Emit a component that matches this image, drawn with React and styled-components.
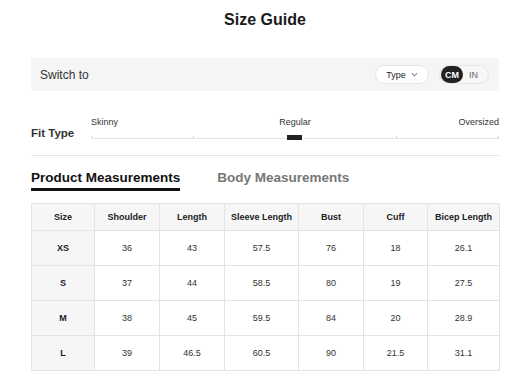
import React from 'react'
import styled, { createGlobalStyle } from 'styled-components'

const GlobalStyle = createGlobalStyle`
  body {
    margin: 0;
    background: #fff;
    font-family: "Liberation Sans", Arial, sans-serif;
    color: #222;
  }
`;

const columns = [
  { label: 'Size', width: 63 },
  { label: 'Shoulder', width: 65 },
  { label: 'Length', width: 65 },
  { label: 'Sleeve Length', width: 74 },
  { label: 'Bust', width: 65 },
  { label: 'Cuff', width: 64 },
  { label: 'Bicep Length', width: 72 },
];

const rows = [
  ['XS', '36', '43', '57.5', '76', '18', '26.1'],
  ['S', '37', '44', '58.5', '80', '19', '27.5'],
  ['M', '38', '45', '59.5', '84', '20', '28.9'],
  ['L', '39', '46.5', '60.5', '90', '21.5', '31.1'],
];

export default function App() {
  return (
    <Page>
      <GlobalStyle />
      <Title>Size Guide</Title>

      <SwitchBar>
        <SwitchLabel>Switch to</SwitchLabel>
        <Controls>
          <TypePill>
            Type
            <svg width="7" height="5" viewBox="0 0 7 5" fill="none">
              <path d="M0.8 1.2 L3.5 3.8 L6.2 1.2" stroke="#333" strokeWidth="0.9" />
            </svg>
          </TypePill>
          <UnitToggle>
            <Unit $active>CM</Unit>
            <Unit>IN</Unit>
          </UnitToggle>
        </Controls>
      </SwitchBar>

      <FitRow>
        <FitLabel>Fit Type</FitLabel>
        <Slider>
          <SliderLabels>
            <span>Skinny</span>
            <span>Regular</span>
            <span>Oversized</span>
          </SliderLabels>
          <Track>
            <Tick /><Tick /><Tick /><Tick /><Tick />
            <Marker />
          </Track>
        </Slider>
      </FitRow>

      <Tabs>
        <Tab $active>Product Measurements</Tab>
        <Tab>Body Measurements</Tab>
      </Tabs>

      <Table>
        <colgroup>
          {columns.map(c => <col key={c.label} style={{ width: c.width }} />)}
        </colgroup>
        <thead>
          <tr>
            {columns.map(c => <Th key={c.label}>{c.label}</Th>)}
          </tr>
        </thead>
        <tbody>
          {rows.map(r => (
            <tr key={r[0]}>
              {r.map((v, i) => <Td key={i} $head={i === 0}>{v}</Td>)}
            </tr>
          ))}
        </tbody>
      </Table>
    </Page>
  )
}

const Page = styled.div`
  width: 468px;
  padding: 10px 11px 0 31px;
`;

const Title = styled.h1`
  margin: 0;
  font-size: 16px;
  line-height: 20px;
  font-weight: bold;
  text-align: center;
  color: #1a1a1a;
`;

const SwitchBar = styled.div`
  margin-top: 28px;
  height: 33px;
  background: #f5f5f5;
  display: flex;
  align-items: center;
  justify-content: space-between;
  padding: 0 10px 0 9px;
`;

const SwitchLabel = styled.span`
  font-size: 12px;
  color: #333;
`;

const Controls = styled.div`
  display: flex;
  align-items: center;
  gap: 10px;
`;

const TypePill = styled.div`
  box-sizing: border-box;
  height: 19px;
  width: 54px;
  border: 1px solid #e6e6e6;
  border-radius: 10px;
  background: #fff;
  display: flex;
  align-items: center;
  justify-content: center;
  gap: 5px;
  font-size: 9px;
  color: #222;
`;

const UnitToggle = styled.div`
  box-sizing: border-box;
  height: 19px;
  width: 50px;
  border: 1px solid #e6e6e6;
  border-radius: 10px;
  background: #f7f7f7;
  display: flex;
  align-items: center;
  padding: 0 1px;
`;

const Unit = styled.span`
  height: 17px;
  border-radius: 9px;
  padding: 0 ${p => (p.$active ? '4px' : '6px')};
  display: flex;
  align-items: center;
  font-size: 9px;
  font-weight: ${p => (p.$active ? 'bold' : 'normal')};
  background: ${p => (p.$active ? '#222' : 'transparent')};
  color: ${p => (p.$active ? '#fff' : '#666')};
`;

const FitRow = styled.div`
  display: flex;
  align-items: flex-end;
  padding: 26px 0 15px;
  border-bottom: 1px solid #e5e5e5;
`;

const FitLabel = styled.span`
  width: 60px;
  flex-shrink: 0;
  font-size: 11.5px;
  line-height: 14px;
  font-weight: bold;
  color: #333;
`;

const Slider = styled.div`
  flex: 1;
`;

const SliderLabels = styled.div`
  display: grid;
  grid-template-columns: 1fr 1fr 1fr;
  font-size: 9px;
  line-height: 11px;
  color: #333;

  span:nth-child(2) { text-align: center; }
  span:nth-child(3) { text-align: right; }
`;

const Track = styled.div`
  position: relative;
  margin-top: 7px;
  height: 5px;
  display: flex;
  justify-content: space-between;
  align-items: flex-start;

  &::before {
    content: "";
    position: absolute;
    left: 0;
    right: 0;
    top: 3px;
    height: 1px;
    background: #e3e3e3;
  }
`;

const Tick = styled.span`
  width: 1px;
  height: 2px;
  margin-top: 1px;
  background: #d6d6d6;
`;

const Marker = styled.span`
  position: absolute;
  left: 50%;
  top: 0;
  width: 15px;
  height: 5px;
  margin-left: -8px;
  background: #222;
`;

const Tabs = styled.div`
  display: flex;
  gap: 37px;
  margin-top: 14px;
`;

const Tab = styled.div`
  font-size: 13.5px;
  line-height: 16px;
  font-weight: bold;
  padding-bottom: 2px;
  color: ${p => (p.$active ? '#111' : '#777')};
  border-bottom: 3px solid ${p => (p.$active ? '#111' : 'transparent')};
`;

const Table = styled.table`
  margin-top: 12px;
  width: 468px;
  table-layout: fixed;
  border-collapse: collapse;
  font-size: 9px;
  color: #333;
`;

const Th = styled.th`
  height: 26px;
  padding: 0;
  border: 1px solid #e4e4e4;
  background: #f6f6f6;
  font-weight: bold;
  color: #222;
  text-align: center;
`;

const Td = styled.td`
  height: 34px;
  padding: 0;
  border: 1px solid #e4e4e4;
  text-align: center;
  background: ${p => (p.$head ? '#f6f6f6' : '#fff')};
  font-weight: ${p => (p.$head ? 'bold' : 'normal')};
  color: ${p => (p.$head ? '#1a1a2a' : '#333')};
`;
